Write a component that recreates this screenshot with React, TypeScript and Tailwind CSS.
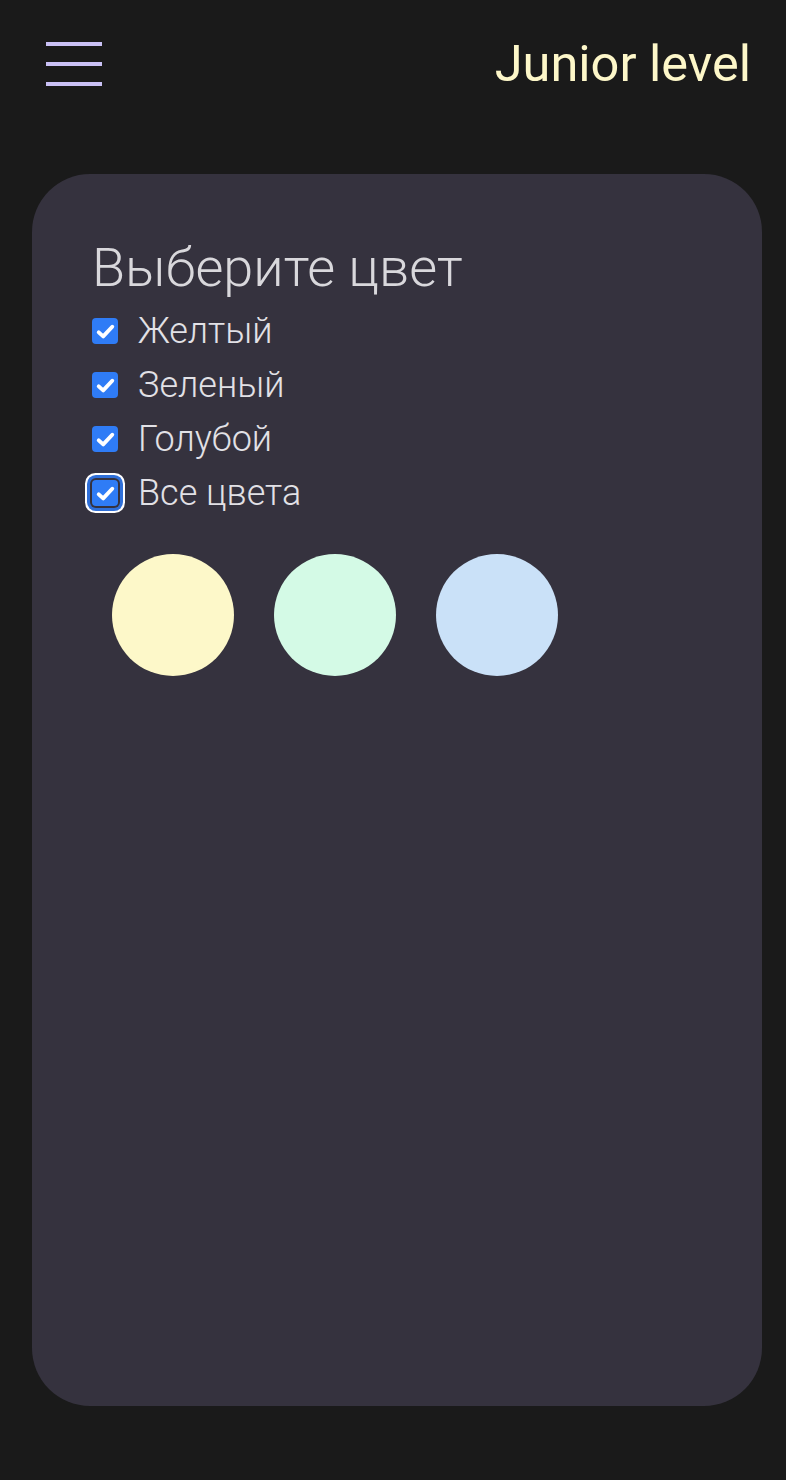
import { useState } from 'react';

const COLORS = [
  { id: 'yellow', label: 'Желтый', swatch: 'bg-[#fdf8c9]' },
  { id: 'green', label: 'Зеленый', swatch: 'bg-[#d4fae6]' },
  { id: 'blue', label: 'Голубой', swatch: 'bg-[#cae1f8]' },
];

function Check({ checked, focused }: { checked: boolean; focused?: boolean }) {
  return (
    <span
      className={`flex h-[26px] w-[26px] shrink-0 items-center justify-center rounded-[4px] ${
        checked ? 'bg-[#2f7cf6]' : 'border-2 border-[#767676] bg-white'
      } ${focused ? 'shadow-[0_0_0_2px_#35323e,0_0_0_5px_#2f6fd8,0_0_0_7px_#ffffff]' : ''}`}
    >
      {checked && (
        <svg viewBox="0 0 16 16" className="h-[23px] w-[23px]" fill="none">
          <path d="M3.3 8.6 6.4 11.4 12.7 4.7" stroke="white" strokeWidth="2.7" strokeLinecap="round" strokeLinejoin="round" />
        </svg>
      )}
    </span>
  );
}

export default function App() {
  const [checked, setChecked] = useState<Record<string, boolean>>({ yellow: true, green: true, blue: true });
  const all = COLORS.every((c) => checked[c.id]);

  const toggle = (id: string) => setChecked((s) => ({ ...s, [id]: !s[id] }));
  const toggleAll = () => {
    const next = !all;
    setChecked({ yellow: next, green: next, blue: next });
  };

  return (
    <div className="min-h-[1480px] bg-[#1a1a1a] font-['Roboto',sans-serif]">
      {/* ── Header ── */}
      <header className="flex items-start justify-between pl-[46px] pr-[35px] pt-[42px]">
        <button className="flex w-[56px] flex-col gap-[16px]" aria-label="menu">
          <span className="h-[4px] w-full bg-[#cac1f5]" />
          <span className="h-[4px] w-full bg-[#cac1f5]" />
          <span className="h-[4px] w-full bg-[#cac1f5]" />
        </button>
        <h1 className="-mt-[8px] text-[50.5px] leading-[60px] font-normal text-[#fdf7c9]">Junior level</h1>
      </header>

      {/* ── Card ── */}
      <main className="ml-[32px] mt-[80px] h-[1232px] w-[730px] rounded-[58px] bg-[#35323e] pl-[60px] pt-[66px]">
        <h2 className="text-[54px] leading-[56px] font-light text-[#d9d8dc]">Выберите цвет</h2>

        <div className="mt-[8px] flex flex-col">
          {COLORS.map((c) => (
            <label key={c.id} className="flex h-[54px] cursor-pointer items-center gap-[20px]" onClick={() => toggle(c.id)}>
              <Check checked={!!checked[c.id]} />
              <span className="text-[36px] font-light text-[#e2e1e6]">{c.label}</span>
            </label>
          ))}
          <label className="flex h-[54px] cursor-pointer items-center gap-[20px]" onClick={toggleAll}>
            <Check checked={all} focused />
            <span className="text-[36px] font-light text-[#e2e1e6]">Все цвета</span>
          </label>
        </div>

        <div className="ml-[20px] mt-[34px] flex gap-[40px]">
          {COLORS.filter((c) => checked[c.id]).map((c) => (
            <div key={c.id} className={`h-[122px] w-[122px] rounded-full ${c.swatch}`} />
          ))}
        </div>
      </main>
    </div>
  );
}
